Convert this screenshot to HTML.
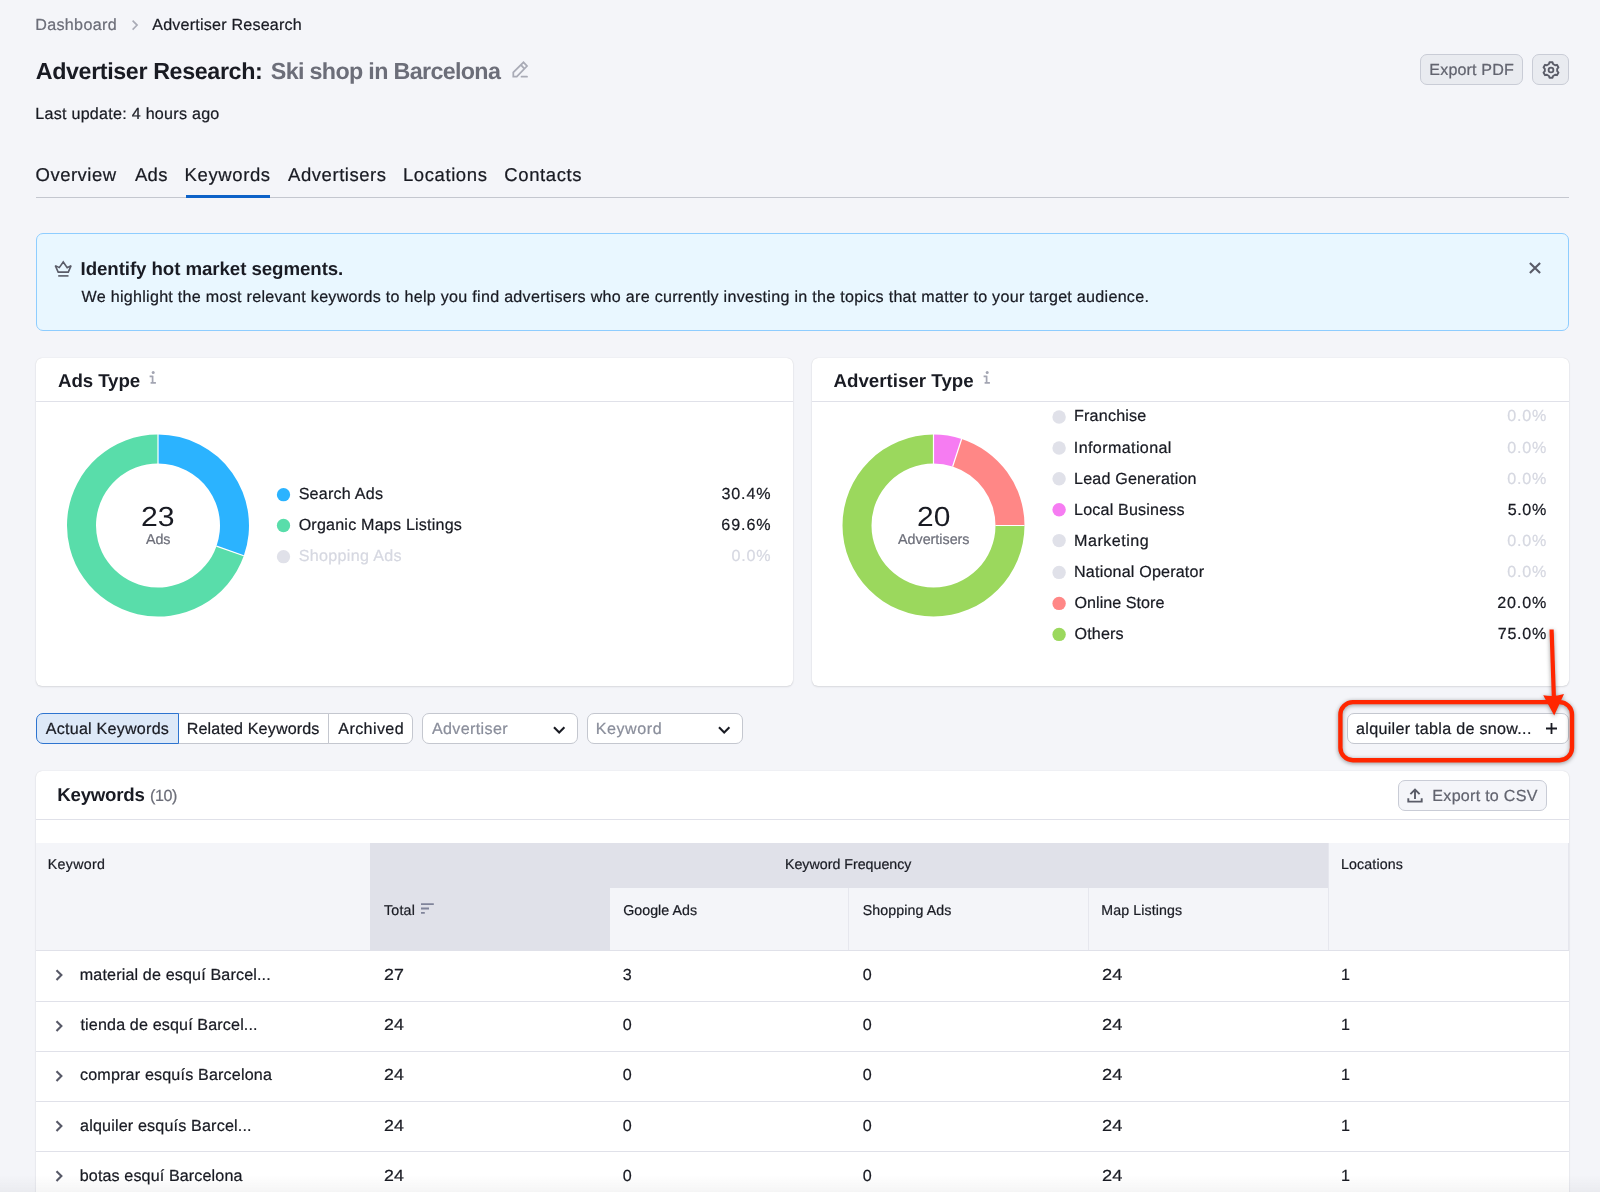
<!DOCTYPE html>
<html>
<head>
<meta charset="utf-8">
<title>Advertiser Research</title>
<style>
*{box-sizing:border-box;margin:0;padding:0}
html,body{width:1600px;height:1192px;overflow:hidden}
body{background:#f4f5f9;font-family:"Liberation Sans",sans-serif;color:#191b23;position:relative;text-rendering:geometricPrecision}
.a{position:absolute;white-space:nowrap;line-height:1}
.x{position:absolute;white-space:nowrap;line-height:1;color:#191b23;-webkit-text-stroke:0.22px}
.xb{-webkit-text-stroke:0}
.card{position:absolute;background:#fff;border-radius:6px;box-shadow:0 0 1px rgba(25,27,35,.18),0 1px 2px rgba(25,27,35,.11)}
.hr{position:absolute;height:1px;background:#e0e1e9}
.btn{position:absolute;background:#e9ebf0;border:1px solid #c9ccd6;border-radius:7px}
.dot{position:absolute;width:13.6px;height:13.6px;border-radius:50%}
.seg{position:absolute;top:713px;height:31px;background:#fff;border:1px solid #c4c7cf}
svg{position:absolute;overflow:visible}
</style>
</head>
<body>
<!-- breadcrumb chevron -->
<svg style="left:131px;top:19px" width="8" height="12" viewBox="0 0 8 12"><path d="M1.6 1.6 L6.1 6.1 L1.6 10.6" fill="none" stroke="#a9abb6" stroke-width="1.6"/></svg>
<!-- pencil -->
<svg id="pencil" style="left:511px;top:60px" width="18" height="18" viewBox="0 0 18 18"><path d="M2.3 12.4 L12.5 2.3 L16 6 L5.8 16.7 H2.3 Z M9.9 4.9 L13.3 8.6" fill="none" stroke="#a9abb6" stroke-width="1.75" stroke-linejoin="miter"/><path d="M10.5 16.7 H16" stroke="#a9abb6" stroke-width="1.75" stroke-linecap="round"/></svg>
<!-- export pdf / gear -->
<div class="btn" style="left:1420px;top:54px;width:103px;height:31px"></div>
<div class="btn" style="left:1532px;top:54px;width:37px;height:31px"></div>
<svg id="gear" style="left:1541.5px;top:60.8px" width="18" height="18" viewBox="0 0 18 18"><path d="M6.95 3.04 L7.49 1.25 L10.51 1.25 L11.05 3.04 L13.13 4.25 L14.96 3.82 L16.47 6.43 L15.18 7.80 L15.18 10.20 L16.47 11.57 L14.96 14.18 L13.13 13.75 L11.05 14.96 L10.51 16.75 L7.49 16.75 L6.95 14.96 L4.87 13.75 L3.04 14.18 L1.53 11.57 L2.82 10.20 L2.82 7.80 L1.53 6.43 L3.04 3.82 L4.87 4.25 Z" fill="none" stroke="#5a5c68" stroke-width="1.9" stroke-linejoin="round"/><circle cx="9" cy="9" r="2.4" fill="none" stroke="#5a5c68" stroke-width="1.8"/></svg>
<!-- tabs -->
<div class="hr" style="left:36px;top:197px;width:1533px;background:#c4c7cf"></div>
<div class="a" style="left:186px;top:195px;width:84px;height:3px;background:#0d62c8"></div>
<!-- notice -->
<div class="a" style="left:36px;top:233px;width:1533px;height:98px;background:#e9f7ff;border:1px solid #8ecdff;border-radius:7px"></div>
<svg id="crown" style="left:54px;top:260px" width="19" height="18" viewBox="0 0 19 18"><path d="M1.3 5.6 L5.3 7.6 L9.25 2 L13.2 7.6 L17.1 5.6 L14.3 12.1 H4.2 Z" fill="none" stroke="#5a5c68" stroke-width="1.6" stroke-linejoin="miter" stroke-miterlimit="2"/><path d="M4.2 15.9 H14.5" stroke="#5a5c68" stroke-width="1.6"/></svg>
<svg style="left:1529px;top:262px" width="12" height="12" viewBox="0 0 12 12"><path d="M0.9 0.9 L11.1 11.1 M11.1 0.9 L0.9 11.1" stroke="#5a5c68" stroke-width="2.1"/></svg>
<!-- cards -->
<div class="card" style="left:36px;top:358px;width:757px;height:328px"></div>
<div class="hr" style="left:36px;top:401px;width:757px"></div>
<svg style="left:148px;top:371px" width="9" height="14" viewBox="0 0 9 14"><circle cx="5.2" cy="1.45" r="1.5" fill="#a3a5b2"/><path d="M1.6 5.4 H4.7 M4.6 4.65 V11.9 M2.6 11.9 H7.9" fill="none" stroke="#a3a5b2" stroke-width="1.7"/></svg>
<div class="card" style="left:812px;top:358px;width:757px;height:328px"></div>
<div class="hr" style="left:812px;top:401px;width:757px"></div>
<svg style="left:982.3px;top:371px" width="9" height="14" viewBox="0 0 9 14"><circle cx="5.2" cy="1.45" r="1.5" fill="#a3a5b2"/><path d="M1.6 5.4 H4.7 M4.6 4.65 V11.9 M2.6 11.9 H7.9" fill="none" stroke="#a3a5b2" stroke-width="1.7"/></svg>
<svg style="left:0;top:0" width="1600" height="1192">
<path d="M158.00 434.50 A91 91 0 0 1 243.81 555.79 L216.47 546.13 A62 62 0 0 0 158.00 463.50 Z" fill="#2bb3ff"/>
<path d="M243.81 555.79 A91 91 0 1 1 158.00 434.50 L158.00 463.50 A62 62 0 1 0 216.47 546.13 Z" fill="#59ddaa"/>
<path d="M158 434 V464 M243.81 555.79 L216.47 546.13" stroke="#fff" stroke-width="1.2"/>
<path d="M933.50 434.50 A91 91 0 0 1 961.62 438.95 L952.66 466.53 A62 62 0 0 0 933.50 463.50 Z" fill="#f67cf2"/>
<path d="M961.62 438.95 A91 91 0 0 1 1024.50 525.50 L995.50 525.50 A62 62 0 0 0 952.66 466.53 Z" fill="#ff8786"/>
<path d="M1024.50 525.50 A91 91 0 1 1 933.50 434.50 L933.50 463.50 A62 62 0 1 0 995.50 525.50 Z" fill="#9bd85d"/>
<path d="M933.5 434 V464 M961.62 438.95 L952.66 466.53 M1024.5 525.5 H995.5" stroke="#fff" stroke-width="1.2"/>
</svg>

<svg style="left:0;top:0" width="1600" height="700">
<circle cx="283.5" cy="494.7" r="6.65" fill="#2bb3ff"/>
<circle cx="283.5" cy="525.5" r="6.65" fill="#59ddaa"/>
<circle cx="283.5" cy="556.7" r="6.65" fill="#e0e1e9"/>
<circle cx="1059.1" cy="417" r="6.7" fill="#e0e1e9"/>
<circle cx="1059.1" cy="448" r="6.7" fill="#e0e1e9"/>
<circle cx="1059.1" cy="478.75" r="6.7" fill="#e0e1e9"/>
<circle cx="1059.1" cy="509.75" r="6.7" fill="#f67cf2"/>
<circle cx="1059.1" cy="540.6" r="6.7" fill="#e0e1e9"/>
<circle cx="1059.1" cy="572.4" r="6.7" fill="#e0e1e9"/>
<circle cx="1059.1" cy="603.4" r="6.7" fill="#ff8786"/>
<circle cx="1059.1" cy="634.4" r="6.7" fill="#9bd85d"/>
</svg>
<!-- filter bar -->
<div class="seg" style="left:178px;width:151px;border-radius:0"></div>
<div class="seg" style="left:328px;width:85px;border-radius:0 7px 7px 0"></div>
<div class="seg" style="left:36px;width:143px;border-radius:7px 0 0 7px;background:#dde9f8;border-color:#2d74d0"></div>
<div class="seg" style="left:422px;width:156px;border-radius:7px"></div>
<svg style="left:553px;top:725.8px" width="13" height="8" viewBox="0 0 13 8"><path d="M1 1.2 L6.2 6.4 L11.4 1.2" fill="none" stroke="#191b23" stroke-width="2.1"/></svg>
<div class="seg" style="left:587px;width:156px;border-radius:7px"></div>
<svg style="left:718.2px;top:725.8px" width="13" height="8" viewBox="0 0 13 8"><path d="M1 1.2 L6.2 6.4 L11.4 1.2" fill="none" stroke="#191b23" stroke-width="2.1"/></svg>
<div class="seg" style="left:1347px;width:222px;border-radius:7px"></div>
<svg style="left:1545.6px;top:723.2px" width="11" height="11" viewBox="0 0 11 11"><path d="M5.5 0 V11 M0 5.5 H11" stroke="#191b23" stroke-width="1.8"/></svg>
<!-- red annotation -->
<svg style="left:0;top:0;filter:drop-shadow(0 1.8px 2px rgba(0,0,0,0.4))" width="1600" height="1192">
<rect x="1340.4" y="702.1" width="231.6" height="58.1" rx="12.5" ry="12.5" fill="none" stroke="#ff2600" stroke-width="4.4"/>
<path d="M1551.6 629.5 L1553.9 698" stroke="#ff2600" stroke-width="4.2" fill="none"/>
<path d="M1543.2 695.3 Q1554 697.2 1564 694.1 L1554.2 715.6 Z" fill="#ff2600"/>
</svg>
<!-- keywords card -->
<div class="card" style="left:36px;top:771px;width:1533px;height:440px;border-radius:6px 6px 0 0"></div>
<div class="btn" style="left:1398px;top:780px;width:149px;height:31px;background:#f4f5f9"></div>
<svg id="upl" style="left:1407px;top:788.4px" width="16" height="16" viewBox="0 0 16 16"><path d="M8 11 V1.6 M3.4 6.2 L8 1.6 L12.6 6.2" fill="none" stroke="#5a5c68" stroke-width="1.9"/><path d="M1.3 10.2 V13.6 H14.7 V10.2" fill="none" stroke="#5a5c68" stroke-width="1.9"/></svg>
<div class="hr" style="left:36px;top:819px;width:1533px"></div>
<!-- table header -->
<div class="a" style="left:36px;top:843px;width:1533px;height:107px;background:#f4f5f9"></div>
<div class="a" style="left:370px;top:843px;width:958px;height:44.5px;background:#e0e1e9"></div>
<div class="a" style="left:370px;top:887px;width:240px;height:63px;background:#e0e1e9"></div>
<div class="a" style="left:848px;top:887.5px;width:1px;height:63px;background:#e6e7ee"></div>
<div class="a" style="left:1087.5px;top:887.5px;width:1px;height:63px;background:#e6e7ee"></div>
<div class="a" style="left:1327.5px;top:843px;width:1px;height:107px;background:#e6e7ee"></div>
<div class="a" style="left:1568px;top:843px;width:1px;height:107px;background:#e6e7ee"></div>
<div class="hr" style="left:36px;top:950px;width:1533px"></div>
<svg style="left:420.6px;top:903.3px" width="14" height="12" viewBox="0 0 14 12"><path d="M0 1.2 H12.8 M0 5.5 H8 M0 9.8 H3.8" stroke="#80849a" stroke-width="1.8"/></svg>
<div class="hr" style="left:36px;top:1000.5px;width:1533px"></div>
<div class="hr" style="left:36px;top:1051px;width:1533px"></div>
<div class="hr" style="left:36px;top:1101px;width:1533px"></div>
<div class="hr" style="left:36px;top:1151px;width:1533px"></div>
<svg style="left:55px;top:969.4px" width="8" height="12" viewBox="0 0 8 12"><path d="M1.5 1.2 L6.4 6.1 L1.5 11" fill="none" stroke="#575967" stroke-width="2.1"/></svg>
<svg style="left:55px;top:1019.5px" width="8" height="12" viewBox="0 0 8 12"><path d="M1.5 1.2 L6.4 6.1 L1.5 11" fill="none" stroke="#575967" stroke-width="2.1"/></svg>
<svg style="left:55px;top:1069.6px" width="8" height="12" viewBox="0 0 8 12"><path d="M1.5 1.2 L6.4 6.1 L1.5 11" fill="none" stroke="#575967" stroke-width="2.1"/></svg>
<svg style="left:55px;top:1119.8px" width="8" height="12" viewBox="0 0 8 12"><path d="M1.5 1.2 L6.4 6.1 L1.5 11" fill="none" stroke="#575967" stroke-width="2.1"/></svg>
<svg style="left:55px;top:1169.9px" width="8" height="12" viewBox="0 0 8 12"><path d="M1.5 1.2 L6.4 6.1 L1.5 11" fill="none" stroke="#575967" stroke-width="2.1"/></svg>

<div id="tx" style="position:absolute;left:0;top:0;width:1600px;height:1192px;will-change:transform">
<div class="x" style="left:35.25px;top:17px;font-size:16.1px;color:#6c6e79;letter-spacing:0.325px;">Dashboard</div>
<div class="x" style="left:152.20px;top:17px;font-size:16.1px;letter-spacing:0.208px;">Advertiser Research</div>
<div class="x xb" style="left:35.75px;top:60px;font-size:23.3px;font-weight:bold;letter-spacing:-0.389px;">Advertiser Research:</div>
<div class="x xb" style="left:270.75px;top:60px;font-size:23.3px;font-weight:bold;color:#6c6e79;letter-spacing:-0.662px;">Ski shop in Barcelona</div>
<div class="x" style="left:1429.35px;top:62px;font-size:16.1px;color:#62646f;letter-spacing:0.139px;">Export PDF</div>
<div class="x" style="left:35.25px;top:106px;font-size:16.1px;letter-spacing:0.261px;">Last update: 4 hours ago</div>
<div class="x" style="left:35.50px;top:166px;font-size:18.5px;letter-spacing:0.500px;">Overview</div>
<div class="x" style="left:135.00px;top:166px;font-size:18.5px;letter-spacing:0.275px;">Ads</div>
<div class="x" style="left:184.60px;top:166px;font-size:18.5px;letter-spacing:0.614px;">Keywords</div>
<div class="x" style="left:288.10px;top:166px;font-size:18.5px;letter-spacing:0.545px;">Advertisers</div>
<div class="x" style="left:402.90px;top:166px;font-size:18.5px;letter-spacing:0.600px;">Locations</div>
<div class="x" style="left:504.30px;top:166px;font-size:18.5px;letter-spacing:0.593px;">Contacts</div>
<div class="x xb" style="left:80.55px;top:260px;font-size:18.7px;font-weight:bold;letter-spacing:-0.073px;">Identify hot market segments.</div>
<div class="x" style="left:81.50px;top:289px;font-size:16.1px;letter-spacing:0.279px;">We highlight the most relevant keywords to help you find advertisers who are currently investing in the topics that matter to your target audience.</div>
<div class="x xb" style="left:58.00px;top:372px;font-size:18.7px;font-weight:bold;letter-spacing:-0.086px;">Ads Type</div>
<div class="x xb" style="left:833.50px;top:372px;font-size:18.7px;font-weight:bold;letter-spacing:0.018px;">Advertiser Type</div>
<div class="x xb" style="left:140.85px;top:503px;font-size:27.5px;transform:scaleX(1.100);transform-origin:0 0;">23</div>
<div class="x" style="left:146.00px;top:533px;font-size:14.3px;color:#6c6e79;letter-spacing:-0.100px;">Ads</div>
<div class="x xb" style="left:916.87px;top:503px;font-size:27.5px;transform:scaleX(1.089);transform-origin:0 0;">20</div>
<div class="x" style="left:898.00px;top:533px;font-size:14.3px;color:#6c6e79;">Advertisers</div>
<div class="x" style="left:298.65px;top:486px;font-size:16.1px;letter-spacing:0.233px;">Search Ads</div>
<div class="x" style="left:721.45px;top:486px;font-size:16.1px;letter-spacing:0.887px;">30.4%</div>
<div class="x" style="left:298.65px;top:517px;font-size:16.1px;letter-spacing:0.200px;">Organic Maps Listings</div>
<div class="x" style="left:721.25px;top:517px;font-size:16.1px;letter-spacing:0.938px;">69.6%</div>
<div class="x" style="left:298.65px;top:548px;font-size:16.1px;color:#d6d8e1;letter-spacing:0.327px;">Shopping Ads</div>
<div class="x" style="left:731.55px;top:548px;font-size:16.1px;color:#d6d8e1;letter-spacing:0.817px;">0.0%</div>
<div class="x" style="left:1074.05px;top:408px;font-size:16.1px;letter-spacing:0.194px;">Franchise</div>
<div class="x" style="left:1507.25px;top:408px;font-size:16.1px;color:#d6d8e1;letter-spacing:0.783px;">0.0%</div>
<div class="x" style="left:1073.80px;top:440px;font-size:16.1px;letter-spacing:0.383px;">Informational</div>
<div class="x" style="left:1507.25px;top:440px;font-size:16.1px;color:#d6d8e1;letter-spacing:0.783px;">0.0%</div>
<div class="x" style="left:1074.05px;top:471px;font-size:16.1px;letter-spacing:0.186px;">Lead Generation</div>
<div class="x" style="left:1507.25px;top:471px;font-size:16.1px;color:#d6d8e1;letter-spacing:0.783px;">0.0%</div>
<div class="x" style="left:1074.05px;top:502px;font-size:16.1px;letter-spacing:0.177px;">Local Business</div>
<div class="x" style="left:1507.65px;top:502px;font-size:16.1px;letter-spacing:0.650px;">5.0%</div>
<div class="x" style="left:1074.05px;top:533px;font-size:16.1px;letter-spacing:0.494px;">Marketing</div>
<div class="x" style="left:1507.25px;top:533px;font-size:16.1px;color:#d6d8e1;letter-spacing:0.783px;">0.0%</div>
<div class="x" style="left:1074.05px;top:564px;font-size:16.1px;letter-spacing:0.184px;">National Operator</div>
<div class="x" style="left:1507.25px;top:564px;font-size:16.1px;color:#d6d8e1;letter-spacing:0.783px;">0.0%</div>
<div class="x" style="left:1074.55px;top:595px;font-size:16.1px;letter-spacing:0.041px;">Online Store</div>
<div class="x" style="left:1497.35px;top:595px;font-size:16.1px;letter-spacing:0.812px;">20.0%</div>
<div class="x" style="left:1074.55px;top:626px;font-size:16.1px;letter-spacing:0.160px;">Others</div>
<div class="x" style="left:1497.75px;top:626px;font-size:16.1px;letter-spacing:0.712px;">75.0%</div>
<div class="x" style="left:45.75px;top:721px;font-size:16.1px;letter-spacing:0.232px;">Actual Keywords</div>
<div class="x" style="left:186.75px;top:721px;font-size:16.1px;letter-spacing:0.133px;">Related Keywords</div>
<div class="x" style="left:338.25px;top:721px;font-size:16.1px;letter-spacing:0.393px;">Archived</div>
<div class="x" style="left:431.90px;top:721px;font-size:16.1px;color:#8a8e9b;letter-spacing:0.361px;">Advertiser</div>
<div class="x" style="left:595.75px;top:721px;font-size:16.1px;color:#8a8e9b;letter-spacing:0.542px;">Keyword</div>
<div class="x" style="left:1356.05px;top:721px;font-size:16.1px;letter-spacing:0.296px;">alquiler tabla de snow...</div>
<div class="x xb" style="left:57.35px;top:786px;font-size:18.7px;font-weight:bold;letter-spacing:-0.264px;">Keywords</div>
<div class="x" style="left:150.00px;top:788px;font-size:16.1px;color:#6c6e79;letter-spacing:-0.417px;">(10)</div>
<div class="x" style="left:1432.35px;top:788px;font-size:16.1px;color:#62646f;letter-spacing:0.258px;">Export to CSV</div>
<div class="x" style="left:47.85px;top:858px;font-size:14.2px;letter-spacing:0.317px;">Keyword</div>
<div class="x" style="left:784.95px;top:858px;font-size:14.2px;letter-spacing:0.022px;">Keyword Frequency</div>
<div class="x" style="left:1340.95px;top:858px;font-size:14.2px;letter-spacing:0.150px;">Locations</div>
<div class="x" style="left:384.05px;top:904px;font-size:14.2px;letter-spacing:0.212px;">Total</div>
<div class="x" style="left:623.15px;top:904px;font-size:14.2px;letter-spacing:0.067px;">Google Ads</div>
<div class="x" style="left:862.75px;top:904px;font-size:14.2px;letter-spacing:0.086px;">Shopping Ads</div>
<div class="x" style="left:1101.35px;top:904px;font-size:14.2px;letter-spacing:0.100px;">Map Listings</div>
<div class="x" style="left:79.75px;top:967px;font-size:16.1px;letter-spacing:0.154px;">material de esquí Barcel...</div>
<div class="x" style="left:383.67px;top:967px;font-size:16.1px;transform:scaleX(1.108);transform-origin:0 0;">27</div>
<div class="x" style="left:622.85px;top:967px;font-size:16.1px;">3</div>
<div class="x" style="left:862.85px;top:967px;font-size:16.1px;">0</div>
<div class="x" style="left:1101.65px;top:967px;font-size:16.1px;transform:scaleX(1.134);transform-origin:0 0;">24</div>
<div class="x" style="left:1340.95px;top:967px;font-size:16.1px;">1</div>
<div class="x" style="left:80.50px;top:1017px;font-size:16.1px;letter-spacing:0.146px;">tienda de esquí Barcel...</div>
<div class="x" style="left:383.67px;top:1017px;font-size:16.1px;transform:scaleX(1.104);transform-origin:0 0;">24</div>
<div class="x" style="left:622.85px;top:1017px;font-size:16.1px;">0</div>
<div class="x" style="left:862.85px;top:1017px;font-size:16.1px;">0</div>
<div class="x" style="left:1101.65px;top:1017px;font-size:16.1px;transform:scaleX(1.134);transform-origin:0 0;">24</div>
<div class="x" style="left:1340.95px;top:1017px;font-size:16.1px;">1</div>
<div class="x" style="left:80.00px;top:1067px;font-size:16.1px;letter-spacing:0.174px;">comprar esquís Barcelona</div>
<div class="x" style="left:383.67px;top:1067px;font-size:16.1px;transform:scaleX(1.104);transform-origin:0 0;">24</div>
<div class="x" style="left:622.85px;top:1067px;font-size:16.1px;">0</div>
<div class="x" style="left:862.85px;top:1067px;font-size:16.1px;">0</div>
<div class="x" style="left:1101.65px;top:1067px;font-size:16.1px;transform:scaleX(1.134);transform-origin:0 0;">24</div>
<div class="x" style="left:1340.95px;top:1067px;font-size:16.1px;">1</div>
<div class="x" style="left:80.00px;top:1118px;font-size:16.1px;letter-spacing:0.177px;">alquiler esquís Barcel...</div>
<div class="x" style="left:383.67px;top:1118px;font-size:16.1px;transform:scaleX(1.104);transform-origin:0 0;">24</div>
<div class="x" style="left:622.85px;top:1118px;font-size:16.1px;">0</div>
<div class="x" style="left:862.85px;top:1118px;font-size:16.1px;">0</div>
<div class="x" style="left:1101.65px;top:1118px;font-size:16.1px;transform:scaleX(1.134);transform-origin:0 0;">24</div>
<div class="x" style="left:1340.95px;top:1118px;font-size:16.1px;">1</div>
<div class="x" style="left:79.75px;top:1168px;font-size:16.1px;letter-spacing:0.125px;">botas esquí Barcelona</div>
<div class="x" style="left:383.67px;top:1168px;font-size:16.1px;transform:scaleX(1.104);transform-origin:0 0;">24</div>
<div class="x" style="left:622.85px;top:1168px;font-size:16.1px;">0</div>
<div class="x" style="left:862.85px;top:1168px;font-size:16.1px;">0</div>
<div class="x" style="left:1101.65px;top:1168px;font-size:16.1px;transform:scaleX(1.134);transform-origin:0 0;">24</div>
<div class="x" style="left:1340.95px;top:1168px;font-size:16.1px;">1</div>
</div>

<div class="a" style="left:0;top:1175px;width:1600px;height:17px;background:linear-gradient(to bottom,rgba(25,27,35,0),rgba(25,27,35,0.045))"></div>
</body>
</html>
